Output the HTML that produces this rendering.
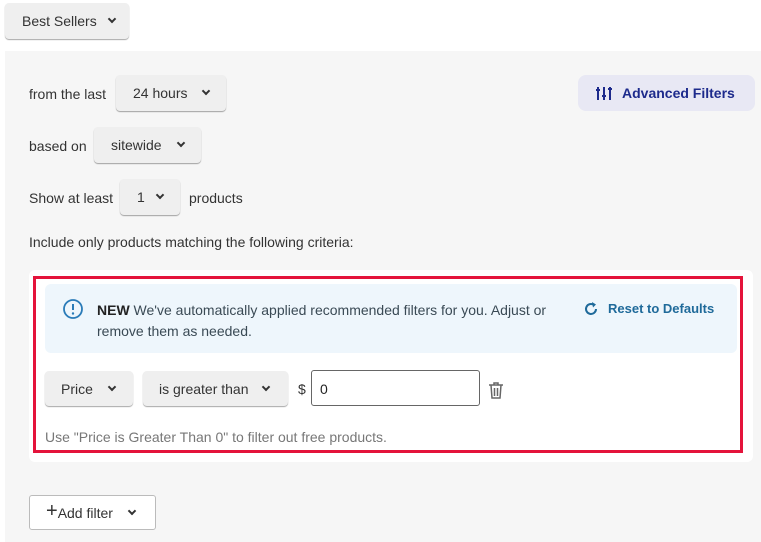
<!DOCTYPE html>
<html><head><style>
*{box-sizing:border-box;margin:0;padding:0}
body{width:761px;height:542px;background:#fff;font-family:"Liberation Sans",sans-serif;font-size:14px;color:#333;position:relative;overflow:hidden}
.a{position:absolute}
.btn{position:absolute;background:#efefef;border-radius:4px;box-shadow:0 1px 1px rgba(0,0,0,.35);color:#333;font-size:14px;display:flex;align-items:center}
.chev{display:inline-block;width:6px;height:6px;border-right:2px solid #333;border-bottom:2px solid #333;transform:rotate(45deg);margin-top:-4px}
</style></head><body>
<div class="btn" style="left:5px;top:3px;width:124px;height:36px;padding-left:17px">Best Sellers<span class="chev" style="margin-left:12px"></span></div>
<div class="a" style="left:5px;top:51px;width:756px;height:491px;background:#f6f6f6"></div>
<div class="a" style="left:29px;top:86px">from the last</div>
<div class="btn" style="left:116px;top:75px;width:110px;height:36px;padding-left:17px">24 hours<span class="chev" style="margin-left:16px"></span></div>
<div class="a" style="left:29px;top:138px">based on</div>
<div class="btn" style="left:94px;top:127px;width:107px;height:36px;padding-left:17px">sitewide<span class="chev" style="margin-left:16px"></span></div>
<div class="a" style="left:29px;top:190px">Show at least</div>
<div class="btn" style="left:120px;top:179px;width:60px;height:36px;padding-left:17px">1<span class="chev" style="margin-left:12px"></span></div>
<div class="a" style="left:189px;top:190px">products</div>
<div class="a" style="left:578px;top:75px;width:177px;height:36px;background:#e8e8f4;border-radius:8px;color:#1d2a8c;font-weight:bold;display:flex;align-items:center;padding-left:18px">
<svg width="16" height="18" viewBox="0 0 16 18" style="margin-right:10px" stroke="#1d2a8c" stroke-width="2" fill="none"><path d="M2 3v13M8 3v13M14 3v13M0 6h4M6 12h4M12 5h4"/></svg>Advanced Filters</div>
<div class="a" style="left:29px;top:234px">Include only products matching the following criteria:</div>
<div class="a" style="left:29px;top:270px;width:724px;height:192px;background:#fff;border-radius:6px"></div>
<div class="a" style="left:33px;top:276px;width:710px;height:177px;border:3px solid #e4133b"></div>
<div class="a" style="left:45px;top:284px;width:692px;height:69px;background:#eef6fc;border-radius:6px"></div>
<svg class="a" style="left:62px;top:298px" width="22" height="22" viewBox="0 0 22 22"><circle cx="11" cy="11" r="9" fill="none" stroke="#2a7bb8" stroke-width="1.8"/><path d="M11 6v6" stroke="#2a7bb8" stroke-width="2"/><circle cx="11" cy="15.5" r="1.2" fill="#2a7bb8"/></svg>
<div class="a" style="left:97px;top:300px;width:470px;line-height:21px;color:#3a4a55"><b style="color:#222">NEW</b> We've automatically applied recommended filters for you. Adjust or remove them as needed.</div>
<svg class="a" style="left:583px;top:301px" width="16" height="16" viewBox="0 0 16 16"><path d="M13 8a5 5 0 1 1-2-4" fill="none" stroke="#1f6a9a" stroke-width="2"/><path d="M9 1l4 2.5-3 3z" fill="#1f6a9a"/></svg>
<div class="a" style="left:608px;top:301px;color:#1f6a9a;font-weight:bold;font-size:13px">Reset to Defaults</div>
<div class="btn" style="left:45px;top:371px;width:88px;height:35px;padding-left:16px">Price<span class="chev" style="margin-left:16px"></span></div>
<div class="btn" style="left:143px;top:371px;width:145px;height:35px;padding-left:16px">is greater than<span class="chev" style="margin-left:14px"></span></div>
<div class="a" style="left:298px;top:381px">$</div>
<div class="a" style="left:311px;top:370px;width:169px;height:36px;border:1px solid #666;border-radius:3px;padding:10px 8px;color:#222">0</div>
<svg class="a" style="left:488px;top:381px" width="16" height="18" viewBox="0 0 16 18" fill="none" stroke="#666" stroke-width="1.5"><path d="M1 4h14M6 4V2h4v2M3 4l1 13h8l1-13M6.5 7v8M9.5 7v8"/></svg>
<div class="a" style="left:45px;top:429px;color:#777">Use "Price is Greater Than 0" to filter out free products.</div>
<div class="a" style="left:29px;top:495px;width:127px;height:35px;background:#fff;border:1px solid #bbb;border-radius:3px;display:flex;align-items:center;padding-left:16px;color:#333"><span style="font-size:20px;line-height:1;margin-top:-3px">+</span>Add filter<span class="chev" style="margin-left:16px"></span></div>
</body></html>
